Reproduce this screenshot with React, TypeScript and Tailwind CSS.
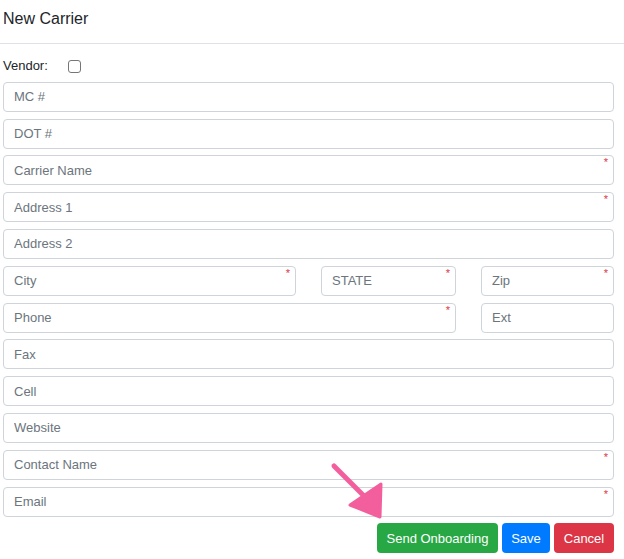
import React from "react";

const font = { fontFamily: '"Liberation Sans", Arial, sans-serif' };

function Field({ label, required, className = "" }: { label: string; required?: boolean; className?: string }) {
  return (
    <div className={`relative h-[30px] rounded-[4px] border border-[#ced4da] bg-white ${className}`}>
      <input
        placeholder={label}
        className="h-full w-full rounded-[4px] bg-transparent pl-[10px] text-[13px] text-[#495057] placeholder:text-[#6c757d] outline-none"
        style={font}
      />
      {required && (
        <span className="absolute right-[5px] top-[1px] text-[11px] leading-none text-[#dc3545]">*</span>
      )}
    </div>
  );
}

export default function App() {
  return (
    <div className="relative h-[559px] w-[624px] overflow-hidden bg-white" style={font}>
      <div className="h-[44px] border-b border-[#dee2e6] pl-[3px] pt-[7px] text-[16px] text-[#212529]">
        New Carrier
      </div>
      <div className="flex flex-col gap-[6.8px] pl-[3px] pr-[10px] pt-[13px]">
        <div className="flex h-[18px] items-center text-[13px] text-[#212529]">
          <span className="w-[65px]">Vendor:</span>
          <span className="h-[13px] w-[13px] rounded-[3px] border border-[#767676] bg-white" />
        </div>
        <Field label="MC #" />
        <Field label="DOT #" />
        <Field label="Carrier Name" required />
        <Field label="Address 1" required />
        <Field label="Address 2" />
        <div className="flex">
          <Field label="City" required className="w-[293px]" />
          <Field label="STATE" required className="ml-[25px] w-[135px]" />
          <Field label="Zip" required className="ml-[25px] w-[133px]" />
        </div>
        <div className="flex">
          <Field label="Phone" required className="w-[453px]" />
          <Field label="Ext" className="ml-[25px] w-[133px]" />
        </div>
        <Field label="Fax" />
        <Field label="Cell" />
        <Field label="Website" />
        <Field label="Contact Name" required />
        <Field label="Email" required />
        <div className="flex justify-end gap-[4px]">
          <button className="h-[30px] w-[121px] rounded-[4px] bg-[#28a745] text-[13px] text-white">Send Onboarding</button>
          <button className="h-[30px] w-[48px] rounded-[4px] bg-[#007bff] text-[13px] text-white">Save</button>
          <button className="h-[30px] w-[60px] rounded-[4px] bg-[#dc3545] text-[13px] text-white">Cancel</button>
        </div>
      </div>
      {/* pointer arrow toward the onboarding button */}
      <svg className="absolute left-0 top-0" width="624" height="559" viewBox="0 0 624 559">
        <line x1="334" y1="466" x2="368" y2="500" stroke="#f25f9c" strokeWidth="5" strokeLinecap="round" />
        <polygon points="350,505 381,484 380,517" fill="#f25f9c" stroke="#f25f9c" strokeWidth="3" strokeLinejoin="round" />
      </svg>
    </div>
  );
}
